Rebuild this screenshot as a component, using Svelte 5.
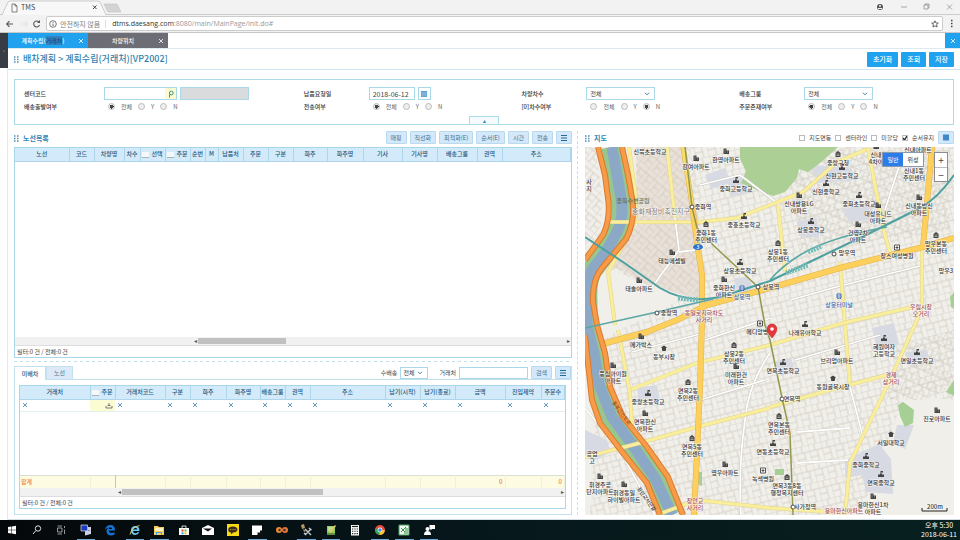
<script lang="ts">
  type Column = { name: string; width: number; check?: boolean };
  type Place = { x: number; y: number; kind?: string; text: string[]; tone?: string };

  const routeColumns: Column[] = [
    { name: '노선', width: 54 },
    { name: '코드', width: 25 },
    { name: '차량명', width: 30 },
    { name: '차수', width: 16 },
    { name: '선택', width: 25, check: true },
    { name: '주문', width: 25, check: true },
    { name: '순번', width: 15 },
    { name: 'M', width: 13 },
    { name: '납품처', width: 25 },
    { name: '주문', width: 25 },
    { name: '구분', width: 25 },
    { name: '화주', width: 34 },
    { name: '화주명', width: 36 },
    { name: '기사', width: 39 },
    { name: '기사명', width: 35 },
    { name: '배송그룹', width: 40 },
    { name: '권역', width: 25 },
    { name: '주소', width: 71 }
  ];

  const orderColumns: Column[] = [
    { name: '거래처', width: 70 },
    { name: '주문', width: 25, check: true },
    { name: '거래처코드', width: 50 },
    { name: '구분', width: 25 },
    { name: '화주', width: 36 },
    { name: '화주명', width: 34 },
    { name: '배송그룹', width: 25 },
    { name: '권역', width: 25 },
    { name: '주소', width: 75 },
    { name: '납기(시작)', width: 35 },
    { name: '납기(종료)', width: 35 },
    { name: '금액', width: 50 },
    { name: '진입제약', width: 36 },
    { name: '주문수', width: 26 }
  ];

  const filters = [
    { id: 'center', label: '센터코드', radioLabel: '배송출발여부', picked: 0 },
    { id: 'date', label: '납품요청일', radioLabel: '전송여부', picked: 0 },
    { id: 'turn', label: '차량차수', radioLabel: '[0]차수여부', picked: 2 },
    { id: 'group', label: '배송그룹', radioLabel: '주문존재여부', picked: 0 }
  ];

  const routeActions = ['매핑', '직선화', '최적화(E)', '순서(E)', '시간', '전송'];

  const layers = [
    { name: '지도면동', on: false },
    { name: '센터라인', on: false },
    { name: '미할당', on: false },
    { name: '순서유지', on: true }
  ];

  const places: Place[] = [
    { x: 650, y: 154, text: ['신묵초등학교'] },
    { x: 726, y: 162, kind: 'apt', text: ['한영아파트'] },
    { x: 696, y: 169, kind: 'apt', text: ['강여아파트'] },
    { x: 736, y: 191, kind: 'school', text: ['중화고등학교'] },
    { x: 633, y: 203, text: ['중화수변공원'], tone: 'park' },
    { x: 703, y: 209, text: ['중화역'] },
    { x: 744, y: 227, kind: 'school', text: ['중흥초등학교'] },
    { x: 706, y: 235, kind: 'civic', text: ['중화1동', '주민센터'] },
    { x: 672, y: 263, kind: 'apt', text: ['태능에셈빌'] },
    { x: 740, y: 273, kind: 'school', text: ['상봉초등학교'] },
    { x: 639, y: 291, kind: 'apt', text: ['태솔아파트'] },
    { x: 724, y: 290, kind: 'apt', text: ['중화한신', '아파트'] },
    { x: 742, y: 299, kind: 'station', text: ['상봉역'], tone: 'blue' },
    { x: 669, y: 315, text: ['중랑역'] },
    { x: 704, y: 315, text: ['동일로지하차도', '사거리'], tone: 'junction' },
    { x: 771, y: 289, text: ['상봉역'] },
    { x: 589, y: 184, text: ['사', '지'] },
    { x: 838, y: 165, kind: 'civic', text: ['중랑구청'] },
    { x: 842, y: 178, kind: 'school', text: ['신현고등학교'] },
    { x: 826, y: 194, kind: 'school', text: ['신현중학교'] },
    { x: 799, y: 206, kind: 'apt', text: ['신내쌍용LG', '아파트'] },
    { x: 859, y: 206, kind: 'school', text: ['중화초등학교'] },
    { x: 878, y: 216, kind: 'apt', text: ['대성유니드', '아파트'] },
    { x: 811, y: 232, kind: 'school', text: ['상봉중학교'] },
    { x: 858, y: 235, kind: 'apt', text: ['건영2차', '아파트'] },
    { x: 778, y: 254, kind: 'civic', text: ['상봉1동', '주민센터'] },
    { x: 847, y: 255, text: ['망우역'] },
    { x: 897, y: 258, kind: 'hospital', text: ['장스여성병원'] },
    { x: 919, y: 208, kind: 'apt', text: ['신내동방신', '아파트'] },
    { x: 936, y: 246, kind: 'civic', text: ['망우본동', '주민센터'] },
    { x: 914, y: 173, text: ['신내1동', '주민센터'] },
    { x: 876, y: 157, kind: 'apt', text: ['신내', '4차아'] },
    { x: 918, y: 152, text: ['신내아파트'] },
    { x: 839, y: 307, kind: 'bus', text: ['상봉터미널'], tone: 'blue' },
    { x: 921, y: 309, text: ['우림시장', '오거리'], tone: 'junction' },
    { x: 946, y: 273, text: ['망우3'] },
    { x: 641, y: 347, kind: 'apt', text: ['메가박스'] },
    { x: 664, y: 359, kind: 'market', text: ['동부시장'] },
    { x: 613, y: 376, kind: 'apt', text: ['풍림아이원', '아파트'] },
    { x: 734, y: 356, kind: 'civic', text: ['상봉2동', '주민센터'] },
    { x: 736, y: 377, kind: 'apt', text: ['미래한건', '아파트'] },
    { x: 688, y: 393, kind: 'civic', text: ['면목2동', '주민센터'] },
    { x: 648, y: 404, kind: 'school', text: ['중랑초등학교'] },
    { x: 645, y: 424, kind: 'apt', text: ['면목한신', '아파트'] },
    { x: 692, y: 449, kind: 'civic', text: ['면목5동', '주민센터'] },
    { x: 725, y: 475, kind: 'apt', text: ['영우아파트'] },
    { x: 592, y: 456, text: ['공업', '고'] },
    { x: 600, y: 487, kind: 'apt', text: ['휘경주공', '단지아파트'] },
    { x: 624, y: 495, kind: 'apt', text: ['휘경동일', '하이빌아파트'] },
    { x: 695, y: 503, text: ['장안교', '사거리'], tone: 'junction' },
    { x: 760, y: 334, kind: 'hospital', text: ['메디앙병원'] },
    { x: 805, y: 335, kind: 'school', text: ['나래유아학교'] },
    { x: 884, y: 349, kind: 'school', text: ['혜원여자', '고등학교'] },
    { x: 917, y: 363, kind: 'school', text: ['면일초등학교'] },
    { x: 837, y: 363, kind: 'apt', text: ['브리엄아파트'] },
    { x: 783, y: 373, kind: 'school', text: ['면목초등학교'] },
    { x: 833, y: 389, kind: 'market', text: ['동원골목시장'] },
    { x: 792, y: 401, text: ['면목역'] },
    { x: 891, y: 377, text: ['경제', '삼거리'], tone: 'junction' },
    { x: 779, y: 427, kind: 'civic', text: ['면목본동', '주민센터'] },
    { x: 937, y: 421, kind: 'apt', text: ['진로아파트'] },
    { x: 891, y: 445, kind: 'market', text: ['서일대학교'] },
    { x: 866, y: 467, kind: 'school', text: ['중화중학교'] },
    { x: 881, y: 485, kind: 'school', text: ['면목중학교'] },
    { x: 773, y: 454, kind: 'school', text: ['면동초등학교'] },
    { x: 763, y: 481, kind: 'hospital', text: ['녹색병원'] },
    { x: 787, y: 488, kind: 'civic', text: ['면목3동8동', '행정복지센터'] },
    { x: 805, y: 509, text: ['사가정역'] },
    { x: 873, y: 507, kind: 'apt', text: ['용마한신1차', '아파트'] },
    { x: 844, y: 513, text: ['용마한신아파트'], tone: 'junction' }
  ];

  const riverCourse = 'M612 147L617 175L621 198Q624 218 617 232L606 252L592 270Q586 280 587 300V325L594 353L600 387L612 417L634 447L656 480L672 515';
  const expressway = 'M598 147L605 175L608 198Q611 218 603 235L585 260M622 147L628 175L632 198Q636 220 626 239L602 268Q592 280 593 302L597 325L605 353L610 387L623 417L647 447L668 477L683 515M585 335L588 363L592 400L600 423L623 453L647 483L660 515';
  const mainStreets = 'M602 344L647 332L677 320L707 305L770 288L840 268L923 247L954 238M932 147L928 192L923 247M692 205L697 242L702 275V320L700 387L697 453L694 515';

  const yellowRoads = [
    'M608 222H700L737 218L770 205L803 192L837 162L870 148',
    'M868 148L876 190L885 235L890 252',
    'M778 205L785 272',
    'M840 262L845 325L850 387',
    'M770 345L843 323L913 307',
    'M922 247V305L917 320L890 380L850 463L845 515',
    'M770 407L830 390L887 375',
    'M630 390L697 363L770 345',
    'M585 457L640 443L697 427L770 408',
    'M618 330L630 393L632 427L643 443',
    'M629 147L636 198Q638 222 626 240L608 272L615 325',
    'M667 147L675 218',
    'M662 513L697 500L770 508L847 513'
  ];

  const whiteRoads = [
    'M675 218L679 250L650 290',
    'M679 252L703 249',
    'M850 387L863 437',
    'M770 353Q748 385 745 420Q738 470 741 515',
    'M585 408L620 450L655 515',
    'M901 160L885 210',
    'M705 340L770 318',
    'M632 352L700 334',
    'M700 400L765 380',
    'M790 300L840 286L920 266',
    'M795 360L880 335',
    'M797 432L850 428',
    'M797 463L848 460',
    'M700 185L740 175L780 205'
  ];

  const stations = [
    [692, 207], [758, 287], [834, 254], [657, 313], [782, 399], [793, 507]
  ];

  const apps = [
    'start', 'search', 'tasks', 'remote', 'edge', 'ie', 'folder', 'store', 'mail',
    'talk', 'notes', 'owl', 'tools', 'editor', 'calc', 'chrome', 'excel', 'people'
  ];
  const running = ['remote', 'ie', 'folder', 'notes', 'tools', 'editor', 'chrome', 'excel', 'people'];
</script>

{#snippet cols(list: Column[])}
  <colgroup>
    {#each list as column, i}
      <col style:width={i === list.length - 1 ? 'auto' : `${column.width}px`} />
    {/each}
  </colgroup>
{/snippet}

{#snippet head(list: Column[])}
  <thead>
    <tr>
      {#each list as column}
        <th>
          {#if column.check}<input type="checkbox" class="head-check" aria-label="{column.name} 전체" />{/if}{column.name}
        </th>
      {/each}
    </tr>
  </thead>
{/snippet}

{#snippet cross()}
  <svg class="cross" viewBox="0 0 6 6"><path d="M1 1l4 4M5 1l-4 4" /></svg>
{/snippet}

{#snippet grip()}
  <svg class="grip" viewBox="0 0 5 7"><path d="M0 1h1.5M3 1h1.5M0 3.5h1.5M3 3.5h1.5M0 6h1.5M3 6h1.5" /></svg>
{/snippet}

{#snippet menuButton(label: string)}
  <button class="soft menu" aria-label={label}>
    <svg viewBox="0 0 8 8"><path d="M1 1.5h6M1 4h6M1 6.5h6" /></svg>
  </button>
{/snippet}

<div class="app">
  <header class="browser">
    <div class="tab-strip">
      <svg class="tab-shape" viewBox="0 0 124 15">
        <path d="M2 15L8 2Q9 1 11 1H97Q99 1 100 2L106 15" fill="#f8f8f8" stroke="#bbb" stroke-width=".7" />
        <path d="M104 4h13l4 8h-13z" fill="#d4d4d4" stroke="#bbb" stroke-width=".5" />
        <path d="M12 4h3l2 2v6h-5zM15 4v2h2" fill="none" stroke="#666" stroke-width=".8" />
        <path d="M93 5.500l3.500 3.500M96.500 5.500l-3.500 3.500" stroke="#444" stroke-width="1" />
        <text x="21" y="10">TMS</text>
      </svg>
      <svg class="window-controls" viewBox="0 0 84 15">
        <circle cx="4" cy="7" r="3" fill="#555" /><circle cx="4" cy="6" r="1" fill="#f2f2f2" /><path d="M2 8.500h4" stroke="#f2f2f2" />
        <path d="M25 7h6M48 5h4v4h-4zM49 5V4h4v4h-1M71 4.500l5 5M76 4.500l-5 5" fill="none" stroke="#888" stroke-width=".7" />
      </svg>
    </div>
    <div class="address-row">
      <svg class="nav" viewBox="0 0 44 14">
        <path d="M12 7H6M8.500 4.200L5.700 7l2.800 2.800" fill="none" stroke="#555" stroke-width="1.100" />
        <path d="M21 7h5M24 4.500L26.500 7L24 9.500" fill="none" stroke="#e0e0e0" />
        <path d="M38 5A3 3 0 1 0 38.500 8" fill="none" stroke="#555" stroke-width="1.100" /><path d="M39 3v3h-3z" fill="#555" />
      </svg>
      <div class="address">
        <svg viewBox="0 0 8 8"><circle cx="4" cy="4" r="3.300" fill="none" stroke="#555" stroke-width=".8" /><path d="M4 3.500v2.500M4 2v.8" stroke="#555" stroke-width=".9" /></svg>
        <span class="insecure">안전하지 않음</span>
        <span class="url"><b>dtms.daesang.com</b>:8080/main/MainPage/init.do#</span>
        <svg class="star" viewBox="0 0 8 8"><path d="M4 .8l1 2.200 2.300.2-1.800 1.500.6 2.300L4 5.800 1.900 7l.6-2.300L.7 3.200 3 3z" fill="none" stroke="#444" stroke-width=".8" /></svg>
      </div>
      <svg class="dots" viewBox="0 0 4 10"><path d="M1 1.500h1.500M1 4.500h1.500M1 7.500h1.500" stroke="#444" stroke-width="1.500" /></svg>
    </div>
  </header>

  <div class="body">
    <aside class="rail"><button aria-label="메뉴 열기">›</button></aside>
    <main>
      <nav class="tabs">
        <button class="tab active"><span>계획수립(<i>거래처</i>)</span>{@render cross()}</button>
        <button class="tab"><span>차량위치</span>{@render cross()}</button>
        <button class="close-all" aria-label="모두 닫기">{@render cross()}</button>
      </nav>

      <div class="title-bar">
        {@render grip()}
        <h1>배차계획 &gt; 계획수립(거래처)[VP2002]</h1>
        <button class="primary">초기화</button>
        <button class="primary">조회</button>
        <button class="primary">저장</button>
      </div>

      <section class="search-panel">
        <div class="filters">
          {#each filters as f}
            <div class="filter" class:wide={f.id === 'center'}>
              <label for={f.id}>{f.label}</label>
              <div class="control">
                {#if f.id === 'center'}
                  <span class="lookup">
                    <input id="center" type="text" />
                    <button aria-label="센터 찾기"><svg viewBox="0 0 8 8"><path d="M2.500 4.500v3" /><circle cx="4.300" cy="3" r="1.900" /></svg></button>
                  </span>
                  <input class="center-name" type="text" disabled aria-label="센터명" />
                {:else if f.id === 'date'}
                  <input id="date" class="date" type="text" value="2018-06-12" />
                  <button class="calendar" aria-label="달력"><svg viewBox="0 0 8 8"><path d="M1 1h6v6H1z" /><path class="lines" d="M1 3h6M1 5h6M3 2v5M5 2v5" /></svg></button>
                {:else}
                  <select id={f.id}><option>전체</option></select>
                {/if}
              </div>
              <span class="caption">{f.radioLabel}</span>
              <div class="radios">
                {#each ['전체', 'Y', 'N'] as option, i}
                  <label><input type="radio" name="{f.id}-flag" checked={i === f.picked} />{option}</label>
                {/each}
              </div>
            </div>
          {/each}
        </div>
        <button class="fold" aria-label="접기">▴</button>
      </section>

      <div class="workspace">
        <div class="left">
          <div class="section-head">
            {@render grip()}
            <h2>노선목록</h2>
            {#each routeActions as action}
              <button class="soft">{action}</button>
            {/each}
            {@render menuButton('노선 메뉴')}
          </div>

          <section class="grid routes">
            <table>
              {@render cols(routeColumns)}
              {@render head(routeColumns)}
            </table>
            <div class="space"></div>
            <div class="scroll route-scroll"><span class="arrow">◂</span><span class="track"><span class="thumb"></span></span><span class="arrow">▸</span></div>
            <p class="count">필터:0 건 / 전체:0 건</p>
          </section>

          <div class="split-h"></div>

          <section class="orders">
            <div class="order-head">
              <button class="sub active">미배차</button>
              <button class="sub">노선</button>
              <div class="order-tools">
                <label for="delivery">수배송</label>
                <select id="delivery"><option>전체</option></select>
                <label class="customer" for="customer">거래처</label>
                <input id="customer" type="text" />
                <button class="soft">검색</button>
                {@render menuButton('주문 메뉴')}
              </div>
            </div>
            <div class="grid order-grid">
              <table>
                {@render cols(orderColumns)}
                {@render head(orderColumns)}
                <tbody>
                  <tr class="filter-row">
                    {#each orderColumns as column}
                      <td class:picked={column.check}>
                        {#if column.check}
                          <svg class="tray" viewBox="0 0 8 7"><path d="M1 4v2h6V4M2.500 3.500h3M4 1v2" /></svg>
                        {:else}
                          <button aria-label="{column.name} 필터 지우기">{@render cross()}</button>
                        {/if}
                      </td>
                    {/each}
                  </tr>
                </tbody>
              </table>
              <div class="space"></div>
              <table>
                {@render cols(orderColumns)}
                <tbody>
                  <tr class="total">
                    {#each orderColumns as column, i}
                      <td class:sum={i > 0}>{i === 0 ? '합계' : i === 11 || i === 13 ? '0' : ''}</td>
                    {/each}
                  </tr>
                </tbody>
              </table>
              <div class="scroll order-scroll"><span class="arrow">◂</span><span class="track"><span class="thumb"></span></span><span class="arrow">▸</span></div>
              <p class="count">필터:0 건 / 전체:0 건</p>
            </div>
          </section>
        </div>

        <div class="split-v"></div>

        <div class="right">
          <div class="section-head">
            {@render grip()}
            <h2>지도</h2>
            {#each layers as layer}
              <label class="layer"><input type="checkbox" checked={layer.on} />{layer.name}</label>
            {/each}
            <button class="soft menu map-list" aria-label="지도 목록"><svg viewBox="0 0 8 8"><path d="M1 1.500h6M1 3.500h6M1 5.500h6" /></svg></button>
          </div>

          <div class="map">
            <svg class="canvas" viewBox="585 147 369 368" preserveAspectRatio="xMidYMid slice">
              <defs>
                <pattern id="blocks-a" width="13" height="19" patternUnits="userSpaceOnUse" patternTransform="rotate(-14)">
                  <path d="M0 0H13M0 7H13M0 13H8M0 0V19M6 0V7M8 7V19" stroke="#cbc7bf" stroke-width=".7" fill="none" />
                </pattern>
                <pattern id="blocks-b" width="11" height="17" patternUnits="userSpaceOnUse" patternTransform="rotate(40)">
                  <path d="M0 0H11M0 6H11M5 6V17M0 0V17M5 12H11" stroke="#cbc4bb" stroke-width=".7" fill="none" />
                </pattern>
                <pattern id="blocks-c" width="9" height="15" patternUnits="userSpaceOnUse" patternTransform="rotate(24)">
                  <path d="M0 0H9M0 8H9M0 0V15M5 0V8" stroke="#cbc7bf" stroke-width=".7" fill="none" />
                </pattern>
              </defs>
              <rect x="585" y="147" width="369" height="368" fill="#f1efe9" />
              <path d="M636 147H686L700 240V300L650 285L610 265L637 225z" fill="#e9e1d8" />
              <path d="M690 147H954V400L905 395L860 515H590L600 340L700 290z" fill="url(#blocks-a)" />
              <path d="M636 147H690L701 240V298L650 286L608 268L637 225zM585 147H595L603 200L600 235L585 250z" fill="url(#blocks-b)" />
              <path d="M898 345L954 330V385L925 400L885 400zM790 150L950 150V230L800 250z" fill="url(#blocks-c)" />
              <path d="M705 175l20-7 6 15-20 6zM727 177l22 1 3 14-22 4zM811 165l40 3 5 12-38 3zM817 218l-20 3 2 15 20 2zM872 328l22-5 5 22-22 4zM906 352l20-2 3 13-20 2zM845 460l34-16 12 15 2 35-27-2-4-17-17 3zM897 425l17 0-9 24-12-6zM774 362l17-4 5 14-15 4zM637 388l20-3 3 15-21 3zM585 430l22 10 4 12-18 9-8-4zM735 278l14-1 4 14-16 2zM843 209l27-4 7 14-28 3z" fill="#d8dae3" />
              <path d="M740 147H838L820 163L808 172L799 169L797 178L785 192L773 196L757 190L741 183L746 171L740 159z" fill="#abcf94" />
              <path d="M898 405l5-3 11 8-1 13-8 4-5-11zM946 392l8-12v16zM775 469h9v6h-9zM698 472h4v14l-4-2zM950 297l4-5v17l-3-2z" fill="#a5cf94" />

              {#each whiteRoads as d}
                <path {d} fill="none" stroke="#c9c5bd" stroke-width="2.600" /><path {d} fill="none" stroke="#fff" stroke-width="1.800" />
              {/each}

              <g fill="none" stroke-linejoin="round">
                <path d={riverCourse} stroke="#97c78e" stroke-width="21" />
                <path d={riverCourse} stroke="#8ba9c7" stroke-width="11" />
                {#each yellowRoads as d}
                  <path {d} stroke="#e3d48e" stroke-width="4" /><path {d} stroke="#f9ee9c" stroke-width="3" />
                {/each}
                <path d="M683 147L692 205" stroke="#e0b34f" stroke-width="5" />
                <path d={mainStreets} stroke="#e0b34f" stroke-width="6" />
                <path d="M683 147L692 205" stroke="#f9dc6a" stroke-width="4" />
                <path d={mainStreets} stroke="#fdcf5b" stroke-width="5" />
                <path d={expressway} stroke="#d77b30" stroke-width="6" />
                <path d={expressway} stroke="#f79b48" stroke-width="4" />
                <path d="M685 147L692 207L697 228L713 245L758 287L765 325L770 340L782 398L790 433L793 515" stroke="#93994b" stroke-width="1.500" />
                <path d="M585 237L623 262L660 288Q687 304 720 297L770 281L820 257L870 233L920 208Q938 198 954 175" stroke="#4d9fa0" stroke-width="2" />
                <path d="M713 299L657 312L585 328M770 280Q782 266 800 255Q830 237 887 227" stroke="#5aa6a4" stroke-width="1.500" />
                <path d="M678 298l20 2M786 273l22-8M808 252l14-6" stroke="#75bbb8" stroke-width="5" stroke-dasharray="2 1" />
              </g>

              {#each stations as [cx, cy]}
                <circle {cx} {cy} r="2" fill="#fff" stroke="#444" stroke-width="1" />
              {/each}
              <ellipse cx="698" cy="247" rx="5" ry="3" fill="#2f72cf" /><text class="shield" x="698" y="249">3</text>

              <text class="district" x="661" y="214">중화재정비촉진지구</text>
              <text class="river-road" transform="translate(620 414) rotate(54)">동부간선도로</text>
              <text class="river-road dark" transform="translate(645 500) rotate(54)">장안교서단길</text>
              {#each places as p}
                <g transform="translate({p.x} {p.y})" class="place {p.tone ?? ''}">
                  {#if p.kind === 'apt'}
                    <path class="icon" d="M-2.500-13.500v5.500h5.500v-3.500h-2.500v-2z" /><path class="windows" d="M-1.500-12h1M-1.500-10h1M1-10h1" />
                  {:else if p.kind === 'school'}
                    <path class="icon" d="M-3-8h6v-2.500h-2v-1h-2v1h-2zM-.5-11v-3h2.500v1.500h-1.500z" />
                  {:else if p.kind === 'civic'}
                    <path class="icon" d="M-2.500-8v-4L0-14l2.500 2v4z" /><path class="windows" d="M-1.500-11h3M-1.500-9.500h3" />
                  {:else if p.kind === 'hospital'}
                    <path class="frame" d="M-2.500-13h5v5h-5z" /><path class="frame" d="M0-12v3M-1.500-10.500h3" />
                  {:else if p.kind === 'market'}
                    <path class="icon" d="M-3-11.500L0-13.500l3 2-1 .8v2.200q-2 1-4 0v-2.200z" />
                  {:else if p.kind === 'bus' || p.kind === 'station'}
                    <path class="frame blue-frame" d="M-2-13h4v4h-4zM-2-11h4M-1.500-8.500h1M1-8.500h1" />
                  {/if}
                  {#each p.text as line, i}
                    <text y={i * 7}>{line}</text>
                  {/each}
                </g>
              {/each}

              <path d="M772 338Q767 332 767 329a5 5 0 0 1 10 0Q777 332 772 338z" fill="#e5373c" stroke="#b92329" stroke-width=".5" />
              <circle cx="772" cy="329" r="1.800" fill="#fff" />
              <path d="M922 508v3h25v-3" fill="none" stroke="#222" />
              <text class="scale" x="935" y="509">200m</text>
            </svg>
            <div class="map-type"><button class="on">일반</button><button>위성</button></div>
            <div class="map-zoom"><button aria-label="확대">+</button><button aria-label="축소">−</button></div>
          </div>
        </div>
      </div>
    </main>
  </div>

  <footer class="taskbar">
    <div class="apps">
      {#each apps as name}
        <button class:running={running.includes(name)} aria-label={name}>
          <svg viewBox="0 0 12 12">
            {#if name === 'start'}
              <path d="M2 3l3.500-.5v3.200H2zM6 2.400l4-.6v3.900H6zM2 6.200h3.500v3.300L2 9zM6 6.200h4v4l-4-.6z" fill="#fff" />
            {:else if name === 'search'}
              <circle cx="7" cy="4.500" r="2.700" fill="none" stroke="#ddd" /><path d="M5 6.500L2 10" stroke="#ddd" />
            {:else if name === 'tasks'}
              <path d="M2.500 4h4.500v4H2.500zM2.500 2h4.500M2.500 10h4.500M9.500 2v2M9.500 5.500V10" fill="none" stroke="#bbb" stroke-width=".8" />
            {:else if name === 'remote'}
              <path d="M1 1h6.500v6H1z" fill="#2038bc" stroke="#dce3f5" stroke-width=".7" /><path d="M5 7l6-1v4l-6 1.500zM8 3h3v3H8z" fill="#c8d2e4" />
            {:else if name === 'edge'}
              <path d="M1 6Q2 1 6.500 1T11 6.500H4.500Q5 9 7.500 9T10.500 8v2.500Q9 11.500 7 11.500Q2.500 11 2.500 7Q2.500 4.500 5 3.500Q2.500 3.500 1 6zM4.600 5H8Q8 3.300 6.500 3.300T4.600 5z" fill="#1474d4" />
            {:else if name === 'ie'}
              <path d="M10.500 7H4Q4.300 9.300 6.300 9.300T8.300 8.300h2Q9.300 11 6.300 11Q2 10.800 2 6.500T6.300 2Q10.600 2.200 10.500 7zM4 5.500h4.300Q8 3.800 6.200 3.800T4 5.500z" fill="#6cc7f3" /><path d="M1 10.500Q3 3 10.500 1.500" fill="none" stroke="#f0d36a" stroke-width=".9" />
            {:else if name === 'folder'}
              <path d="M1 2h4l1 1h5v8H1z" fill="#f4cb65" /><path d="M2 4h8v3H2z" fill="#fff0b8" /><path d="M3 8h6v3H8V9H4v2H3z" fill="#4ba3db" />
            {:else if name === 'store'}
              <path d="M1 4h10v7H1z" fill="#fff" /><path d="M4 4V2h4v2" fill="none" stroke="#fff" stroke-width=".8" /><path d="M3.500 5.500h2v2h-2z" fill="#e8482f" /><path d="M6.500 5.500h2v2h-2z" fill="#6ab52d" /><path d="M3.500 8.300h2v2h-2z" fill="#2b9fe0" /><path d="M6.500 8.300h2v2h-2z" fill="#f2b91d" />
            {:else if name === 'mail'}
              <path d="M0 4l6-3 6 3v7H0z" fill="#fff" /><path d="M1 4.500h9L6 7.500z" fill="#111" />
            {:else if name === 'talk'}
              <path d="M0 0h12v12H0z" fill="#f8d915" /><path d="M6 2.500C-.5 2.500.5 8.500 4 8.500v2l2-2C12 8.500 12 2.500 6 2.500z" fill="#3b2b1b" /><path d="M3 5.600h6" stroke="#b69d25" stroke-dasharray="1 .7" />
            {:else if name === 'notes'}
              <path d="M1 1.500h10v9.500H1z" fill="#fff" /><path d="M11.200 6.500v5H6.500V8.500H9V6.500z" fill="#111" />
            {:else if name === 'owl'}
              <circle cx="3" cy="6" r="3" fill="#f18b32" /><circle cx="9" cy="6" r="3" fill="#e87536" /><circle cx="3.500" cy="6" r="1.200" fill="#36312f" /><circle cx="8.500" cy="6" r="1.200" fill="#36312f" />
            {:else if name === 'tools'}
              <path d="M1 1l3-1 1 4-3 1zM3 5l3 2-2 1z" fill="#b79862" /><path d="M5 11l6-6M5 5l6 6M9 4l2.500 2M4 9l2 2" stroke="#c7d0d7" stroke-width="1.300" />
            {:else if name === 'editor'}
              <path d="M2 2h8v9H2z" fill="#94ce5a" /><path d="M3 4h6M3 6h5" stroke="#f1fae5" stroke-width=".8" /><path d="M4 8l6-7 1 1-5 7z" fill="#e3c369" /><path d="M2 9h8v2H2z" fill="#5b9241" />
            {:else if name === 'calc'}
              <path d="M2 1h8v10.500H2z" fill="#fff" /><path d="M3 2.500h6" stroke="#222" stroke-width="1.200" /><path d="M3 5h6M3 7.300h6M3 9.600h6" stroke="#222" stroke-width="1.100" stroke-dasharray="1.300 1" />
            {:else if name === 'chrome'}
              <circle cx="6" cy="6" r="5" fill="#e44b3c" /><path d="M6 6L1.300 4.400A5 5 0 0 0 5.500 11z" fill="#34a854" /><path d="M6 6h4.800A5 5 0 0 1 5.500 11z" fill="#fbc52e" /><circle cx="6" cy="6" r="2.400" fill="#fff" /><circle cx="6" cy="6" r="1.800" fill="#4688e8" />
            {:else if name === 'excel'}
              <path d="M1 1h10v10H1z" fill="#eff7ef" stroke="#4b9f61" /><path d="M3 8l5-5M3 4l4 4M7 5h3M7 7h3M6 9h4" stroke="#32914c" stroke-width="1" />
            {:else}
              <circle cx="4.500" cy="5" r="2" fill="#fff" /><path d="M1 11q0-4 3.500-4T8 11zM6.500 1H12v4H9L7.500 6.500V5h-1z" fill="#fff" />
            {/if}
          </svg>
        </button>
      {/each}
    </div>
    <div class="clock"><span>오후 5:30</span><span>2018-06-11</span></div>
  </footer>
</div>

<style>
  :global(body) {
    margin: 0;
    background: #fff;
  }

  .app {
    display: flex;
    flex-direction: column;
    min-height: 100vh;
    font-family: "Noto Sans CJK KR", "Noto Sans", sans-serif;
    font-size: 6px;
    line-height: 8px;
    color: #444;
  }

  .app * {
    box-sizing: border-box;
  }

  button, input, select {
    margin: 0;
    padding: 0;
    font: inherit;
    color: inherit;
    border: 0;
    border-radius: 0;
    background: none;
  }

  h1, h2, p {
    margin: 0;
  }

  svg {
    display: block;
    flex: none;
  }

  /* browser frame */
  .browser {
    background: #f2f2f2;
    border-bottom: 1px solid #c8c8c8;
  }

  .tab-strip {
    display: flex;
    justify-content: space-between;
    height: 15px;
    border-bottom: 1px solid #ccc;
  }

  .tab-shape {
    width: 124px;
    height: 15px;
  }

  .tab-shape text {
    font-size: 7px;
    fill: #444;
  }

  .window-controls {
    width: 84px;
    height: 15px;
  }

  .address-row {
    display: flex;
    align-items: center;
    height: 17px;
    padding-right: 6px;
  }

  .nav {
    width: 46px;
    height: 14px;
  }

  .address {
    display: flex;
    flex: 1;
    align-items: center;
    height: 15px;
    padding: 0 3px 0 2px;
    background: #fff;
    border: 1px solid #ccc;
    border-radius: 2px;
  }

  .address svg {
    width: 8px;
    height: 8px;
  }

  .insecure {
    margin-left: 3px;
    padding-right: 5px;
    font-size: 7px;
    color: #777;
    border-right: 1px solid #ddd;
  }

  .url {
    flex: 1;
    margin-left: 6px;
    font-family: "Open Sans", "Noto Sans", sans-serif;
    font-size: 7px;
    color: #999;
  }

  .url b {
    font-weight: 400;
    color: #333;
  }

  .dots {
    width: 4px;
    height: 10px;
    margin-left: 7px;
  }

  /* page */
  .body {
    display: flex;
    flex: 1;
  }

  .rail {
    width: 8px;
    border-right: 1px solid #e2ebf0;
  }

  .rail button {
    width: 8px;
    height: 35px;
    color: #8da7c4;
    background: #383c45;
  }

  main {
    display: flex;
    flex: 1;
    flex-direction: column;
    min-width: 0;
    border-bottom: 1px solid #d5dde4;
  }

  .tabs {
    display: flex;
    height: 15px;
  }

  .tab {
    display: flex;
    align-items: center;
    width: 80px;
    padding-right: 4px;
    color: #fff;
    background: #6d6e75;
  }

  .tab span {
    flex: 1;
    font-weight: 500;
  }

  .tab i {
    font-style: normal;
    color: #164d80;
    background: #3182bd;
  }

  .tab.active,
  .close-all {
    background: #20a2ef;
  }

  .cross {
    width: 6px;
    height: 6px;
    fill: none;
    stroke: currentColor;
    stroke-width: 0.8;
  }

  .close-all {
    display: flex;
    align-items: center;
    justify-content: center;
    width: 15px;
    margin-left: auto;
    color: #fff;
  }

  .title-bar {
    display: flex;
    align-items: center;
    gap: 3px;
    height: 22px;
    padding: 0 6px;
    border-top: 1px solid #dcebf2;
    border-bottom: 1px solid #cfe5ee;
  }

  .grip {
    width: 5px;
    height: 7px;
    stroke: #4d8fb5;
    stroke-width: 1.3;
  }

  h1 {
    flex: 1;
    margin-left: 1px;
    font-size: 9px;
    font-weight: 500;
    line-height: 12px;
    color: #2f7fae;
  }

  .primary {
    height: 15px;
    padding: 0 6px;
    font-size: 7px;
    font-weight: 500;
    color: #fff;
    background: #20a2ef;
    border-radius: 1px;
  }

  .search-panel {
    display: flex;
    flex-direction: column;
    margin: 9px 6px 0;
    padding-top: 7px;
    border: 1px solid #abdbe7;
  }

  .filters {
    display: grid;
    grid-template-columns: 280fr 218fr 218fr 214fr;
    padding-left: 9px;
  }

  .filter {
    display: grid;
    grid-template-columns: 65px 1fr;
    grid-auto-rows: 13px;
    align-items: center;
  }

  .filter.wide {
    grid-template-columns: 80px 1fr;
  }

  .filter > label,
  .caption {
    color: #333;
    font-weight: 500;
  }

  .control {
    display: flex;
    gap: 3px;
    height: 13px;
  }

  .control input,
  .control select {
    height: 13px;
    border: 1px solid #a9d9e8;
    background-color: #fff;
  }

  .lookup {
    display: flex;
    width: 73px;
    border: 1px solid #a9d9e8;
  }

  .control .lookup input {
    flex: 1;
    min-width: 0;
    height: 11px;
    border: 0;
  }

  .lookup button {
    display: grid;
    place-items: center;
    width: 11px;
    background: #fbfbcf;
  }

  .lookup svg {
    width: 8px;
    height: 8px;
    fill: none;
    stroke: #3e8f8f;
  }

  .control .center-name {
    width: 69px;
    background: #d9dbdc;
  }

  .control .date {
    width: 46px;
    padding-left: 3px;
    font-size: 7px;
  }

  .calendar {
    display: grid;
    place-items: center;
    width: 13px;
    border: 1px solid #a9d9e8;
  }

  .calendar svg {
    width: 8px;
    height: 8px;
    fill: #5b9bd0;
  }

  .calendar .lines {
    stroke: #b8d8ef;
    stroke-width: 0.4;
  }

  select {
    appearance: none;
    border: 1px solid #a9d9e8;
    background: #fff url("data:image/svg+xml,%3Csvg xmlns='http://www.w3.org/2000/svg' viewBox='0 0 6 4'%3E%3Cpath d='M1 .8l2 2 2-2' fill='none' stroke='%23467f9e'/%3E%3C/svg%3E") no-repeat right 4px center / 6px 4px;
  }

  .control select {
    width: 69px;
    padding-left: 3px;
  }

  .radios {
    display: flex;
    gap: 6px;
    padding-left: 4px;
    color: #666;
  }

  .radios label {
    display: flex;
    align-items: center;
    gap: 6px;
  }

  .radios input {
    appearance: none;
    width: 7px;
    height: 7px;
    border: 1px solid #bbb;
    border-radius: 50%;
    background: #eee;
  }

  .radios input:checked {
    background: radial-gradient(circle, #444 0 2px, #eee 2px);
  }

  .fold {
    align-self: center;
    width: 30px;
    height: 8px;
    margin-top: 3px;
    line-height: 7px;
    color: #3a86b3;
    background: #f4fafd;
    border: 1px solid #abdbe7;
    border-bottom: 0;
  }

  .workspace {
    display: flex;
    flex: 1;
    gap: 5px;
    padding: 6px 6px 4px;
  }

  .left {
    display: flex;
    flex: 558;
    flex-direction: column;
    min-width: 0;
  }

  .right {
    display: flex;
    flex: 369;
    flex-direction: column;
    min-width: 0;
    margin-left: 2px;
  }

  .split-v {
    width: 1px;
    border-left: 1px dashed #c5e0ea;
  }

  .split-h {
    height: 8px;
    background: repeating-linear-gradient(90deg, #c0dfeb 0 3px, transparent 3px 6px) 0 3px / 100% 1px no-repeat;
  }

  .section-head {
    display: flex;
    align-items: flex-start;
    gap: 3px;
    height: 16px;
  }

  .section-head .grip {
    margin-top: 4px;
  }

  h2 {
    flex: 1;
    margin-left: 1px;
    font-size: 7px;
    line-height: 15px;
    color: #2f86b4;
  }

  .soft {
    height: 13px;
    padding: 0 4px;
    color: #3f718f;
    background: #d3e8fa;
    border: 1px solid #b8d9ee;
    border-radius: 1px;
  }

  .menu {
    display: grid;
    place-items: center;
    width: 16px;
    padding: 0;
  }

  .menu svg {
    width: 8px;
    height: 8px;
    stroke: #23699a;
    stroke-width: 1.1;
  }

  .map-list svg {
    stroke: #4089c9;
    stroke-width: 1.8;
  }

  .layer {
    display: flex;
    align-items: center;
    gap: 4px;
    height: 13px;
    margin-right: 1px;
  }

  .layer input {
    appearance: none;
    width: 6px;
    height: 6px;
    border: 1px solid #bbb;
  }

  .layer input:checked {
    background: #fff url("data:image/svg+xml,%3Csvg xmlns='http://www.w3.org/2000/svg' viewBox='0 0 6 6'%3E%3Cpath d='M1 3l1.500 2L5 1' fill='none' stroke='%23222' stroke-width='1.300'/%3E%3C/svg%3E") center / 6px;
  }

  /* data grids */
  .grid {
    display: flex;
    flex-direction: column;
    border: 1px solid #a9d6e8;
  }

  .routes {
    flex: 211 0 0;
  }

  table {
    width: 100%;
    table-layout: fixed;
    border-collapse: collapse;
  }

  th,
  td {
    height: 13px;
    padding: 0;
    overflow: hidden;
    white-space: nowrap;
  }

  th {
    font-weight: 500;
    color: #24587c;
    background: #d2eafa;
    border-right: 1px solid #add6ea;
    border-bottom: 1px solid #add6ea;
  }

  .head-check {
    appearance: none;
    width: 7px;
    height: 6px;
    margin-right: 2px;
    vertical-align: middle;
    background: #f5f8f8;
    border-bottom: 1px solid #a7b5bb;
  }

  .filter-row td {
    height: 12px;
    padding-left: 2px;
    border-bottom: 1px solid #e4eff4;
  }

  .filter-row button {
    display: block;
    color: #3f7fa8;
  }

  .filter-row .picked {
    background: #fcfcd4;
  }

  .tray {
    width: 8px;
    height: 7px;
    margin: 0 2px 0 auto;
    fill: none;
    stroke: #777;
  }

  .total td {
    padding-left: 1px;
    font-weight: 500;
    color: #ed7d3a;
    background: #fdfce3;
    border-top: 1px solid #d6e1d2;
    border-right: 1px solid #f1f0da;
  }

  .total .sum {
    padding-right: 2px;
    text-align: right;
  }

  .total td:nth-child(2) {
    border-right-color: #c3c8b8;
  }

  .space {
    flex: 1;
  }

  .scroll {
    display: flex;
    align-items: center;
    height: 9px;
    background: #f1f1f1;
    border-bottom: 1px solid #ddd;
  }

  .route-scroll {
    padding-left: 177px;
  }

  .order-scroll {
    padding-left: 96px;
  }

  .arrow {
    width: 6px;
    text-align: center;
    color: #555;
  }

  .track {
    flex: 1;
  }

  .thumb {
    display: block;
    width: 24%;
    height: 6px;
    background: #c1c1c1;
  }

  .order-scroll .thumb {
    width: 46%;
  }

  .count {
    height: 11px;
    padding-left: 2px;
    line-height: 11px;
  }

  .orders {
    display: flex;
    flex: 149 0 0;
    flex-direction: column;
    border: 1px solid #c3e1ec;
    border-top: 0;
  }

  .order-head {
    display: flex;
    height: 14px;
    border-bottom: 1px solid #c3e1ec;
  }

  .sub {
    width: 27px;
    color: #4e7590;
    background: #dbe9f8;
    border: 1px solid #c3e1ec;
    border-bottom: 0;
  }

  .sub.active {
    width: 31px;
    height: 14px;
    font-weight: 500;
    color: #24587c;
    background: #fff;
    border-left: 0;
  }

  .order-tools {
    display: flex;
    align-items: center;
    gap: 3px;
    margin-left: auto;
  }

  .order-tools select {
    width: 28px;
    height: 12px;
    padding-left: 2px;
  }

  .order-tools .customer {
    margin-left: 8px;
  }

  .order-tools input {
    width: 69px;
    height: 12px;
    border: 1px solid #a9d9e8;
  }

  .order-grid {
    flex: 1;
    margin: 5px 5px 5px 4px;
  }

  /* map */
  .map {
    position: relative;
    flex: 1;
    overflow: hidden;
    background: #f1efe9;
  }

  .canvas {
    width: 100%;
    height: 100%;
  }

  .canvas text {
    text-anchor: middle;
    font-size: 6px;
    font-weight: 500;
    fill: #333;
    stroke: #fff;
    stroke-width: 1px;
    stroke-opacity: 0.8;
    paint-order: stroke;
  }

  .canvas .district {
    font-size: 7px;
    font-weight: 400;
    fill: #777;
  }

  .canvas .river-road {
    font-size: 5px;
    fill: #8d4c21;
    stroke: none;
  }

  .canvas .dark {
    fill: #333;
  }

  .canvas .shield {
    font-size: 5px;
    fill: #fff;
    stroke: none;
  }

  .canvas .park text {
    fill: #66735f;
    stroke: none;
  }

  .canvas .blue text {
    fill: #3360ad;
  }

  .canvas .junction text {
    fill: #9d4f62;
  }

  .icon {
    fill: #444;
  }

  .windows {
    stroke: #ddd;
    stroke-width: 0.6;
  }

  .frame {
    fill: #fff;
    stroke: #444;
    stroke-width: 0.9;
  }

  .blue-frame {
    stroke: #3360ad;
  }

  .map-type {
    position: absolute;
    top: 5px;
    right: 30px;
    display: flex;
    border: 1px solid #8a98b0;
  }

  .map-type button {
    width: 20px;
    height: 13px;
    color: #333;
    background: #fff;
  }

  .map-type .on {
    color: #fff;
    background: #2b7de9;
  }

  .map-zoom {
    position: absolute;
    top: 5px;
    right: 6px;
    display: grid;
    width: 14px;
    border: 1px solid #8e8e8e;
  }

  .map-zoom button {
    height: 14px;
    font-size: 10px;
    line-height: 12px;
    background: #fff;
  }

  .map-zoom button + button {
    border-top: 1px solid #bbb;
  }

  /* taskbar */
  .taskbar {
    display: flex;
    justify-content: space-between;
    height: 20px;
    color: #fff;
    background: linear-gradient(90deg, #05080a, #06171b 50%, #08201f);
  }

  .apps {
    display: grid;
    grid-template-columns: repeat(18, 1fr);
    flex: 0 1 441px;
  }

  .apps button {
    display: grid;
    place-items: center;
    margin: 0 3px;
    border-bottom: 1px solid transparent;
  }

  .apps .running {
    border-color: #6ea9d8;
  }

  .apps svg {
    width: 12px;
    height: 12px;
  }

  .clock {
    display: flex;
    flex-direction: column;
    justify-content: center;
    align-items: center;
    padding-right: 3px;
    font-size: 7px;
    line-height: 9px;
  }
</style>
